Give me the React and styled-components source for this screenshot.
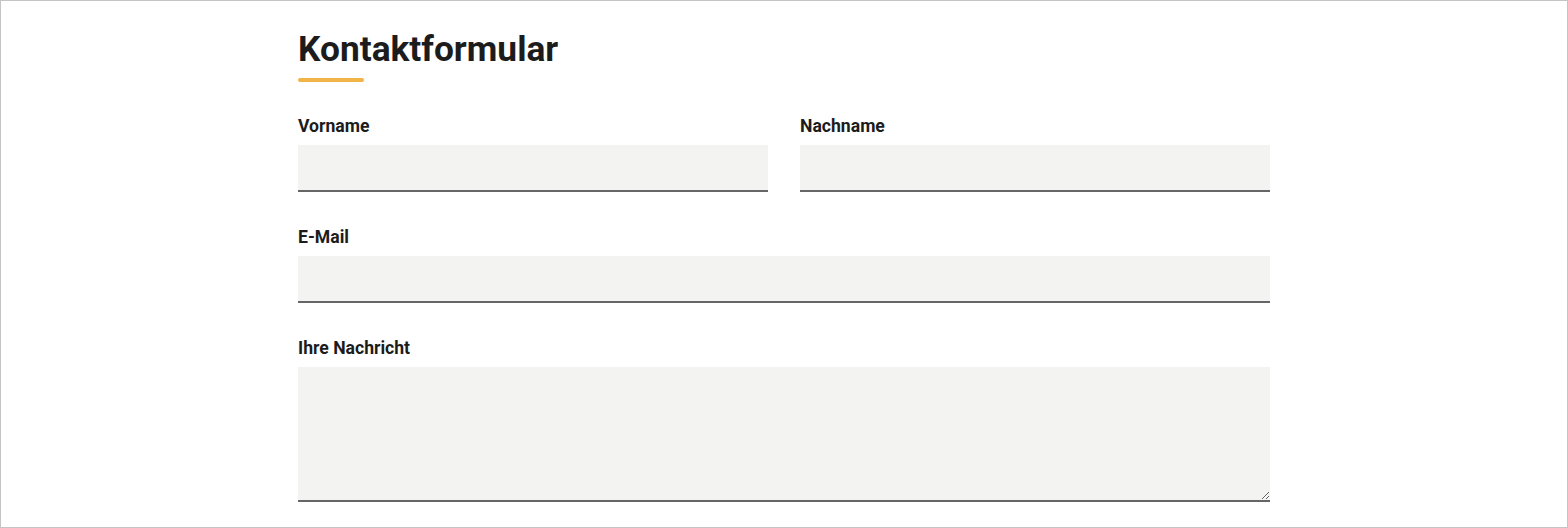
import React from 'react';
import styled, { createGlobalStyle } from 'styled-components';

const GlobalStyle = createGlobalStyle`
    * {
        box-sizing: border-box;
    }
    body {
        margin: 0;
        background: #fff;
        font-family: Roboto, "Liberation Sans", Arial, sans-serif;
        color: #1a1a1a;
    }
`;

const Page = styled.div`
    height: 528px;
    border: 1px solid #c4c4c4;
    padding: 27px 0 0 297px;
`;

const FormSection = styled.section`
    width: 972px;
`;

const Title = styled.h2`
    margin: 0;
    font-size: 35.3px;
    line-height: 42px;
    font-weight: 700;
    color: #1c1c1c;
`;

const Accent = styled.div`
    width: 66px;
    height: 4px;
    margin: 8px 0 0;
    border-radius: 2px;
    background: #f0b447;
`;

const Form = styled.form`
    display: grid;
    grid-template-columns: 1fr 1fr;
    column-gap: 32px;
    row-gap: 33px;
    margin-top: 32px;
`;

const Field = styled.div`
    display: flex;
    flex-direction: column;
    grid-column: ${(p) => (p.$wide ? '1 / -1' : 'auto')};
`;

const Label = styled.label`
    font-size: 17.6px;
    line-height: 24px;
    font-weight: 700;
    color: #1c1c1c;
    margin-bottom: 7px;
`;

const Input = styled.input`
    height: 47px;
    border: none;
    border-bottom: 2px solid #666;
    background: #f3f3f1;
    font-family: inherit;
    font-size: 16px;
    padding: 0 12px;
    outline: none;
`;

const TextArea = styled.textarea`
    height: 135px;
    border: none;
    border-bottom: 2px solid #666;
    background: #f3f3f1;
    font-family: inherit;
    font-size: 16px;
    padding: 12px;
    outline: none;
    resize: vertical;
    display: block;
`;

const App = () => {
    return (
        <>
            <GlobalStyle />
            <Page>
                <FormSection>
                    <Title>Kontaktformular</Title>
                    <Accent />
                    <Form>
                        <Field>
                            <Label htmlFor="vorname">Vorname</Label>
                            <Input id="vorname" type="text" />
                        </Field>
                        <Field>
                            <Label htmlFor="nachname">Nachname</Label>
                            <Input id="nachname" type="text" />
                        </Field>
                        <Field $wide>
                            <Label htmlFor="email">E-Mail</Label>
                            <Input id="email" type="email" />
                        </Field>
                        <Field $wide>
                            <Label htmlFor="nachricht">Ihre Nachricht</Label>
                            <TextArea id="nachricht" />
                        </Field>
                    </Form>
                </FormSection>
            </Page>
        </>
    );
};

export default App;
